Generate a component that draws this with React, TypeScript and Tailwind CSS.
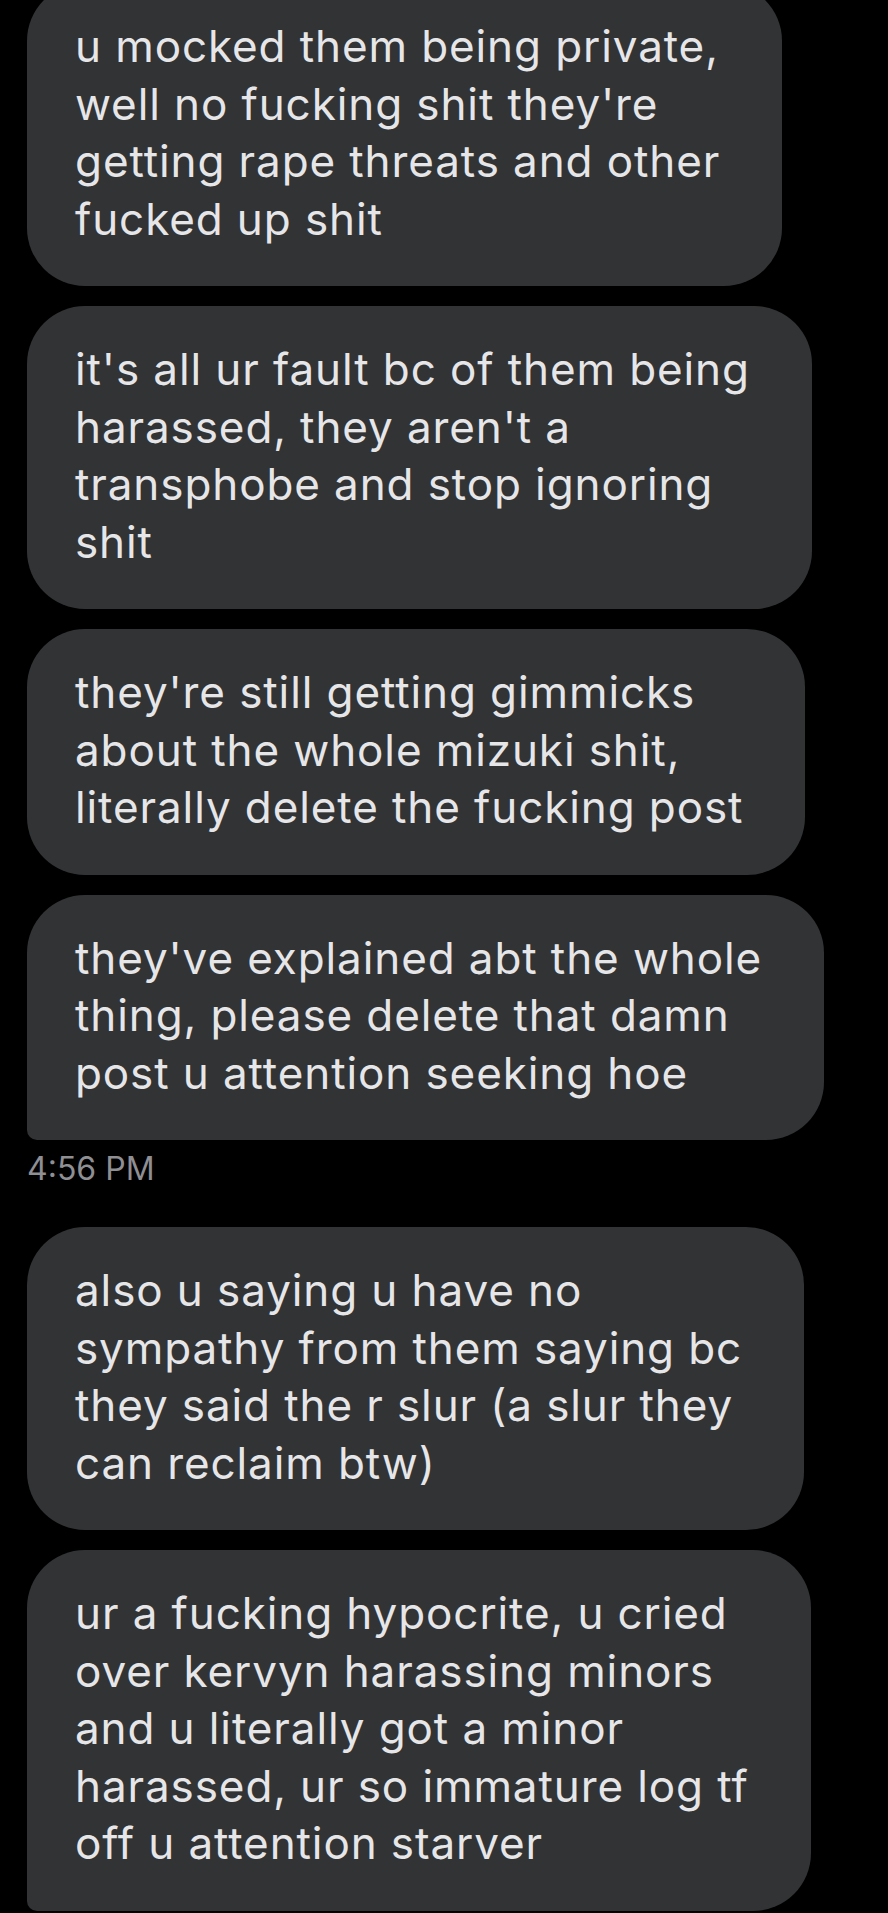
import React from 'react'

type Message = {
  lines: string[]
  tail?: boolean
}

const before: Message[] = [
  {
    lines: [
      'u mocked them being private,',
      "well no fucking shit they're",
      'getting rape threats and other',
      'fucked up shit',
    ],
  },
  {
    lines: [
      "it's all ur fault bc of them being",
      "harassed, they aren't a",
      'transphobe and stop ignoring',
      'shit',
    ],
  },
  {
    lines: [
      "they're still getting gimmicks",
      'about the whole mizuki shit,',
      'literally delete the fucking post',
    ],
  },
  {
    lines: [
      "they've explained abt the whole",
      'thing, please delete that damn',
      'post u attention seeking hoe',
    ],
    tail: true,
  },
]

const after: Message[] = [
  {
    lines: [
      'also u saying u have no',
      'sympathy from them saying bc',
      'they said the r slur (a slur they',
      'can reclaim btw)',
    ],
  },
  {
    lines: [
      'ur a fucking hypocrite, u cried',
      'over kervyn harassing minors',
      'and u literally got a minor',
      'harassed, ur so immature log tf',
      'off u attention starver',
    ],
    tail: true,
  },
]

const Bubble: React.FC<{ msg: Message }> = ({ msg }) => (
  <div
    className={`w-fit rounded-[58px] bg-[#313335] pl-[48px] pr-[62px] pt-[35px] pb-[38px] text-[44px] leading-[57.5px] tracking-[0.9px] text-[#e6e6e8] ${
      msg.tail ? 'rounded-bl-[10px]' : ''
    }`}
  >
    {msg.lines.map((line, i) => (
      <div key={i} className="whitespace-nowrap">
        {line}
      </div>
    ))}
  </div>
)

export default function App() {
  return (
    <div
      className="min-h-screen w-full overflow-hidden bg-black"
      style={{ fontFamily: 'Inter, "Noto Sans", sans-serif' }}
    >
      <div className="-mt-[17px] flex flex-col px-[27px]">
        <div className="flex flex-col gap-[20px]">
          {before.map((m, i) => (
            <Bubble key={i} msg={m} />
          ))}
        </div>

        <div className="mt-[13px] mb-[42px] text-[32px] leading-[32px] text-[#8e8e93]">
          4:56 PM
        </div>

        <div className="flex flex-col gap-[20px]">
          {after.map((m, i) => (
            <Bubble key={i} msg={m} />
          ))}
        </div>
      </div>
    </div>
  )
}
